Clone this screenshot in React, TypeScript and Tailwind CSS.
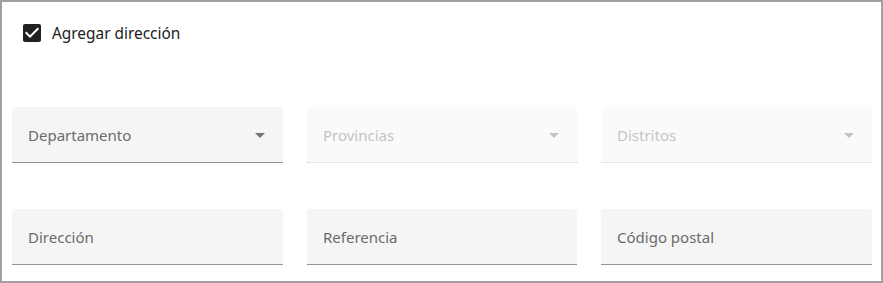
import React from 'react';

type FieldProps = {
  label: string;
  select?: boolean;
  disabled?: boolean;
};

function Field({ label, select, disabled }: FieldProps) {
  return (
    <div
      className={`relative flex h-[56px] items-center rounded-t-[4px] pl-[16px] pr-[18px] ${
        disabled ? 'bg-[#fafafa]' : 'bg-[#f5f5f5]'
      }`}
    >
      <span
        className={`flex-1 text-[15px] leading-none ${disabled ? 'text-[#c4c4c4]' : 'text-[#6b6b6b]'}`}
      >
        {label}
      </span>
      {select && (
        <svg width="10" height="5" viewBox="0 0 10 5" className="shrink-0">
          <path d="M0 0 L10 0 L5 5 Z" fill={disabled ? '#c2c2c2' : '#757575'} />
        </svg>
      )}
      <div
        className={`absolute bottom-0 left-0 right-0 h-px ${
          disabled ? 'border-b border-dotted border-[#d0d0d0]' : 'bg-[#949494]'
        }`}
      />
    </div>
  );
}

export default function App() {
  return (
    <div
      className="h-[283px] w-[883px] border-2 border-[#a0a0a0] bg-white pl-[10px] pr-[9px]"
      style={{ fontFamily: '"Segoe UI", "Noto Sans", sans-serif' }}
    >
      <label className="mt-[20px] ml-[8px] flex h-[24px] items-center gap-[8px]">
        <svg width="24" height="24" viewBox="0 0 24 24" className="shrink-0 -translate-y-px">
          <path
            fill="#212121"
            d="M19 3H5c-1.11 0-2 .9-2 2v14c0 1.1.89 2 2 2h14c1.11 0 2-.9 2-2V5c0-1.1-.89-2-2-2zm-9 14l-5-5 1.41-1.41L10 14.17l7.59-7.59L19 8l-9 9z"
          />
        </svg>
        <span className="text-[15.4px] text-[#212121]">Agregar dirección</span>
      </label>

      <div className="mt-[61px] grid grid-cols-[271px_270px_271px] gap-x-[24px] gap-y-[46px]">
        <Field label="Departamento" select />
        <Field label="Provincias" select disabled />
        <Field label="Distritos" select disabled />
        <Field label="Dirección" />
        <Field label="Referencia" />
        <Field label="Código postal" />
      </div>
    </div>
  );
}
